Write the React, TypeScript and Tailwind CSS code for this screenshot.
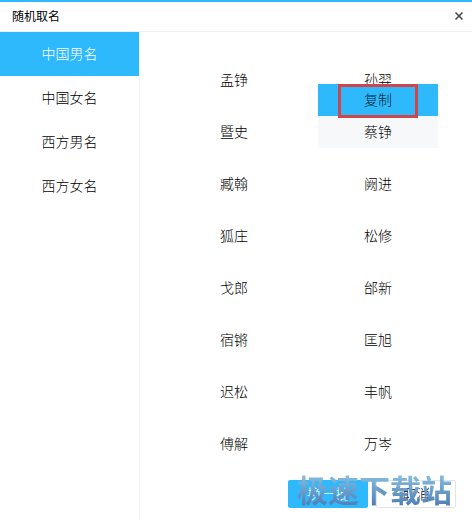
import React, { useState } from "react";

const categories = ["中国男名", "中国女名", "西方男名", "西方女名"];

const names = [
  "孟铮", "孙羿",
  "暨史", "蔡铮",
  "臧翰", "阙进",
  "狐庄", "松修",
  "戈郎", "邰新",
  "宿锵", "匡旭",
  "迟松", "丰帆",
  "傅解", "万岑",
];

function TitleBar() {
  return (
    <header className="flex h-8 items-center justify-between border-t-2 border-b border-t-[#2fb9fd] border-b-[#f0f0f0] pr-2 pl-3">
      <h1 className="text-xs font-normal">随机取名</h1>
      <button type="button" aria-label="关闭" className="px-px pb-0.5 text-[#444]">
        <svg className="size-2" viewBox="0 0 8 8" fill="none" stroke="currentColor" strokeWidth={1.5}>
          <path d="M0.5 0.5L7.5 7.5M7.5 0.5L0.5 7.5" />
        </svg>
      </button>
    </header>
  );
}

interface NameCellProps {
  name: string;
  menuOpen: boolean;
  onClick: () => void;
}

function NameCell({ name, menuOpen, onClick }: NameCellProps) {
  return (
    <li className="relative">
      <button
        type="button"
        onClick={onClick}
        className={`block h-8 w-full ${menuOpen ? "bg-[#f7f8fa]" : "bg-white"}`}
      >
        {name}
      </button>
      {menuOpen && (
        <div className="absolute inset-x-0 bottom-full z-10">
          <button type="button" className="block h-8 w-full bg-[#2fb9fd] text-[#0c2230]">
            复制
          </button>
          <div className="pointer-events-none absolute inset-x-5 top-0 -bottom-0.5 border-3 border-[#d04549]" />
        </div>
      )}
    </li>
  );
}

export default function App() {
  const [category, setCategory] = useState(0);
  const [selected, setSelected] = useState(3);

  return (
    <div className="flex min-h-screen flex-col bg-white font-['Liberation_Sans','Noto_Sans_CJK_SC',sans-serif] text-sm font-light text-black">
      <TitleBar />
      <div className="flex grow">
        <nav className="w-35 shrink-0 border-r border-[#f3f3f3]">
          {categories.map((label, i) => (
            <button
              key={label}
              type="button"
              onClick={() => setCategory(i)}
              className={`block h-11 w-full ${i === category ? "bg-[#2fb9fd] text-white" : ""}`}
            >
              {label}
            </button>
          ))}
        </nav>

        <main className="flex grow flex-col justify-between pt-8 pb-3">
          <ul className="grid grid-cols-2 gap-x-6 gap-y-5 px-[34px]">
            {names.map((name, i) => (
              <NameCell
                key={i}
                name={name}
                menuOpen={i === selected}
                onClick={() => setSelected(i)}
              />
            ))}
          </ul>

          <div className="relative flex justify-end gap-2 pr-4">
            <button type="button" className="h-7 w-20 rounded-xs bg-[#2fb9fd] text-white">
              换一批
            </button>
            <button type="button" className="h-7 w-20 rounded-xs border border-[#e4e4e4]">
              取消
            </button>
            {/* site watermark, sits over both buttons */}
            <span className="pointer-events-none absolute right-5 -bottom-1 bg-linear-to-b from-[#8cc4e4] to-[#4672ac] bg-clip-text text-[31px] leading-10 font-bold text-transparent">
              极速下载站
            </span>
          </div>
        </main>
      </div>
    </div>
  );
}
